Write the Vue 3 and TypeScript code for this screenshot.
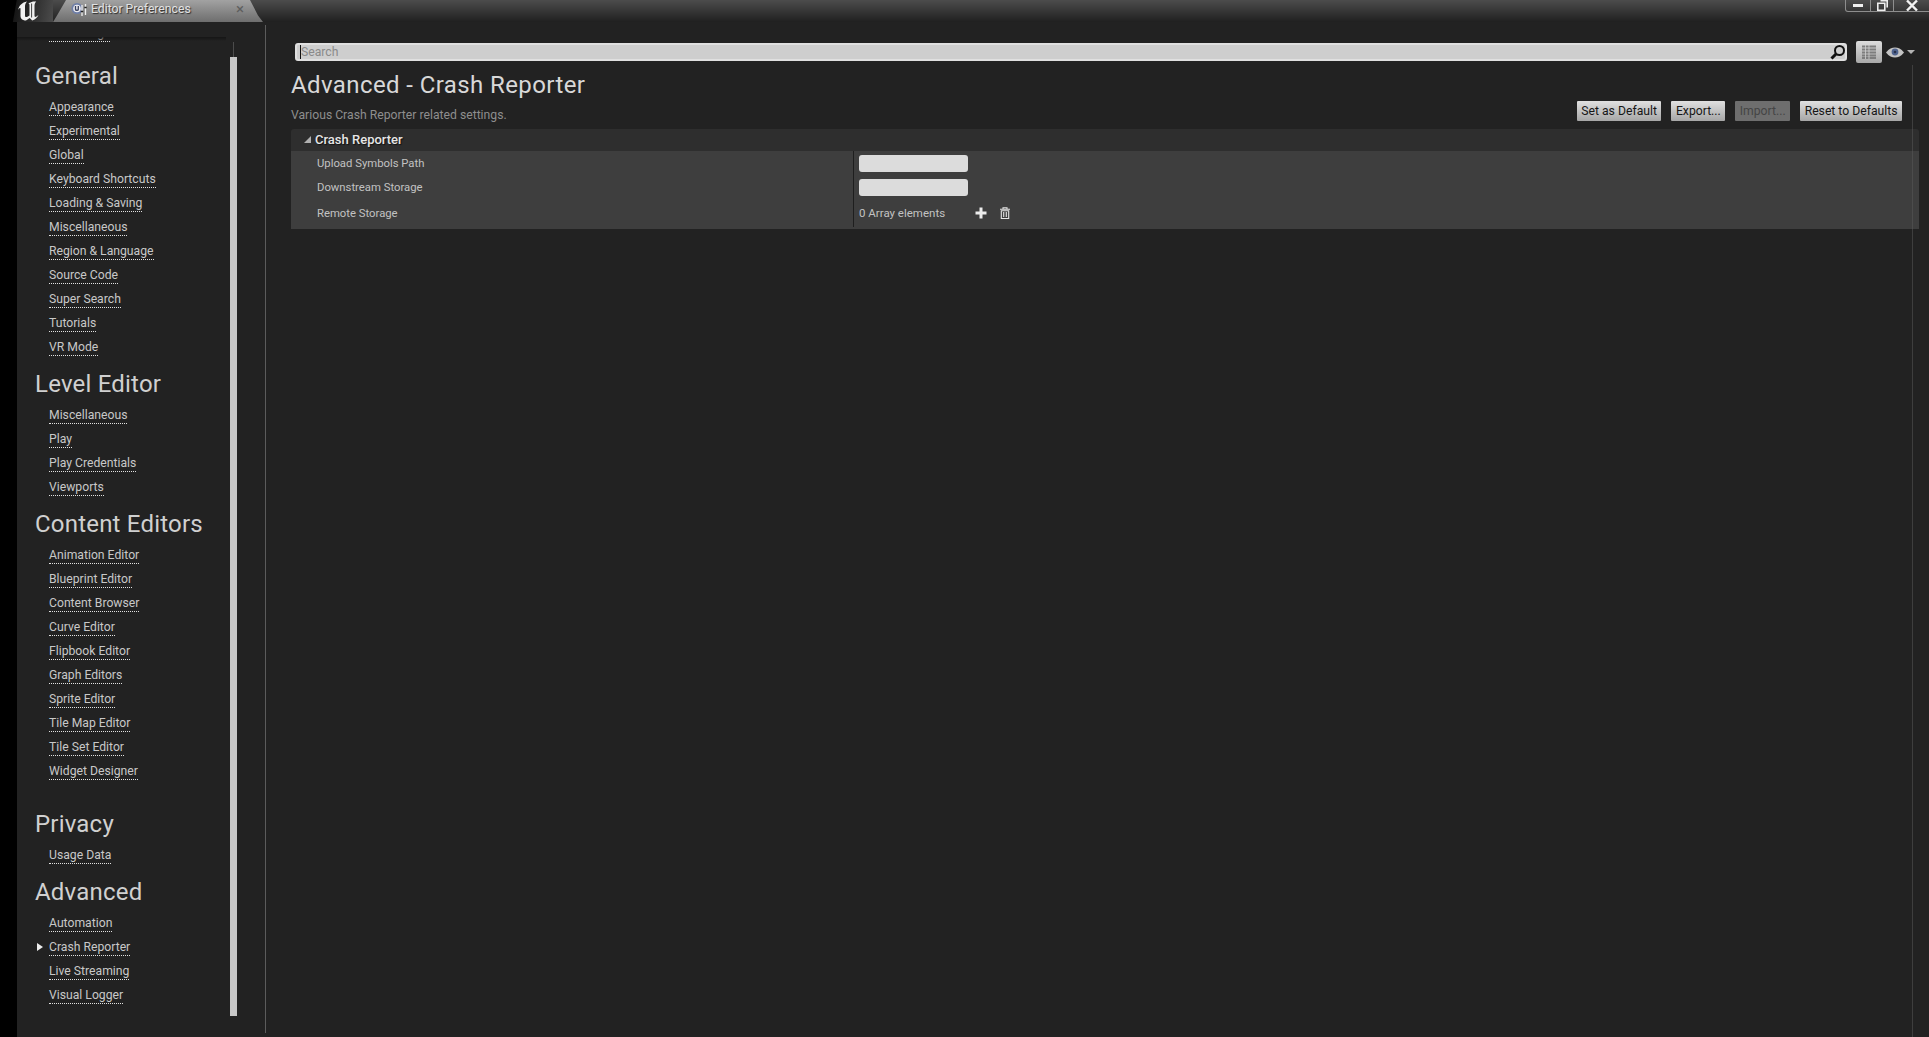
<script setup lang="ts">
interface Section { title: string; gap: string; items: string[] }
const sections: Section[] = [
  { title: 'General', gap: 'g16', items: ['Appearance', 'Experimental', 'Global', 'Keyboard Shortcuts', 'Loading & Saving', 'Miscellaneous', 'Region & Language', 'Source Code', 'Super Search', 'Tutorials', 'VR Mode'] },
  { title: 'Level Editor', gap: 'g10', items: ['Miscellaneous', 'Play', 'Play Credentials', 'Viewports'] },
  { title: 'Content Editors', gap: 'g10', items: ['Animation Editor', 'Blueprint Editor', 'Content Browser', 'Curve Editor', 'Flipbook Editor', 'Graph Editors', 'Sprite Editor', 'Tile Map Editor', 'Tile Set Editor', 'Widget Designer'] },
  { title: 'Privacy', gap: 'g26', items: ['Usage Data'] },
  { title: 'Advanced', gap: 'g10', items: ['Automation', 'Crash Reporter', 'Live Streaming', 'Visual Logger'] },
]
const buttons = [
  { label: 'Set as Default', off: false },
  { label: 'Export...', off: false },
  { label: 'Import...', off: true },
  { label: 'Reset to Defaults', off: false },
]
</script>

<template>
  <div class="app">
    <header class="titlebar">
      <div class="logo">
        <svg width="24" height="20" viewBox="0 0 24 20">
          <path fill="#f2f2f2" d="M1 9C2 4.500 5 1.500 10 .5 8.500 2 8 3.500 8 6v8.500c0 1.500 1 2 2.500 1.300L12.500 14.500V4.500C12.500 3.300 12.200 2.800 11.500 2.300L16 .5h3.200C18 2 17.500 3 17.500 5v9.500c0 1.600.8 1.800 2.300.8L21.500 14c-1.400 2.800-3.700 4.800-6.300 5.500l-2.500-2.600L9 19.500c-3 0-5.500-1.500-5.500-4.500V8.500C3.500 6.500 2.800 6.500 1 9z" />
          <path fill="none" stroke="#2a2a2a" stroke-width=".9" d="M14.600 2.500V16.500" />
        </svg>
      </div>
      <div class="tab">
        <svg class="tab-icon" width="16" height="15" viewBox="0 0 16 15">
          <circle cx="6" cy="6.500" r="5.500" fill="#6f7fa8" />
          <circle cx="6" cy="6.500" r="3.800" fill="#e8e8ee" />
          <path d="M4.500 4v3.500c0 1.200 2.800 1.200 2.800 0V4" stroke="#39415c" stroke-width="1.300" fill="none" />
          <path d="M11 3v11M14.500 2v11" stroke="#f0f0f0" stroke-width="1.300" />
          <path d="M9.800 9.500h2.400M13.300 5.500h2.400" stroke="#222" stroke-width="1.500" />
        </svg>
        <span class="tab-label">Editor Preferences</span>
        <span class="tab-close">×</span>
      </div>
      <div class="spacer"></div>
      <div class="winctl">
        <div class="wbtn w-min"><i></i></div>
        <div class="wbtn w-max">
          <svg width="11" height="11" viewBox="0 0 11 11"><path d="M3.500 .8h6.700v6.700M.8 3.200h7v7h-7z" fill="none" stroke="#eee" stroke-width="1.600" /></svg>
        </div>
        <div class="wbtn w-close">
          <svg width="12" height="11" viewBox="0 0 12 11"><path d="M1 .5l10 10M11 .5l-10 10" stroke="#f2f2f2" stroke-width="2.400" /></svg>
        </div>
      </div>
    </header>

    <div class="body">
      <div class="strip"></div>
      <aside class="sidebar">
        <nav class="nav">
          <div class="row first"><span class="link">All Settings</span></div>
          <section v-for="s in sections" :key="s.title" :class="s.gap">
            <h2 class="heading">{{ s.title }}</h2>
            <div v-for="it in s.items" :key="it" class="row">
              <i v-if="it === 'Crash Reporter'" class="marker"></i>
              <span class="link">{{ it }}</span>
            </div>
          </section>
          <div class="navshade"></div>
        </nav>
        <div class="scroll">
          <div class="scroll-line"></div>
          <div class="scroll-thumb"></div>
        </div>
      </aside>

      <main class="main">
        <div class="toolbar">
          <div class="search">
            <span class="caret"></span>
            <span class="search-text">Search</span>
            <svg class="glass" width="16" height="16" viewBox="0 0 16 16">
              <circle cx="9.500" cy="6.500" r="4.500" fill="none" stroke="#111" stroke-width="2" />
              <path d="M6 10l-4.500 4.500" stroke="#111" stroke-width="3" />
            </svg>
          </div>
          <div class="listbtn">
            <svg width="14" height="14" viewBox="0 0 14 14">
              <path d="M0 1.500h14M0 4.500h14M0 7.500h14M0 10.500h14M0 13h14" stroke="#7d7d7d" stroke-width="2" />
              <path d="M3.500 0v14M7 0v14" stroke="#d0d0d0" stroke-width=".8" />
            </svg>
          </div>
          <svg class="eye" width="18" height="11" viewBox="0 0 18 11">
            <path d="M0 5.500C3 1.500 6 .5 9 .5s6 1 9 5c-3 4-6 5-9 5s-6-1-9-5z" fill="#c4c4c4" />
            <circle cx="9" cy="5" r="3.400" fill="#50648f" />
            <circle cx="9" cy="5" r="1.300" fill="#28324c" />
          </svg>
          <i class="eye-arrow"></i>
        </div>

        <div class="pagehead">
          <div class="heads">
            <h1 class="title">Advanced - Crash Reporter</h1>
            <p class="desc">Various Crash Reporter related settings.</p>
          </div>
          <div class="actions">
            <button v-for="b in buttons" :key="b.label" class="btn" :class="{ off: b.off }">{{ b.label }}</button>
          </div>
        </div>

        <div class="panel">
          <div class="panel-head"><i class="tri"></i><span>Crash Reporter</span></div>
          <div class="panel-body">
            <div class="labels">
              <div class="lab l1">Upload Symbols Path</div>
              <div class="lab l2">Downstream Storage</div>
              <div class="lab l3">Remote Storage</div>
            </div>
            <div class="values">
              <div class="val l1"><div class="input"></div></div>
              <div class="val l2"><div class="input"></div></div>
              <div class="val l3">
                <span class="count">0 Array elements</span>
                <svg class="plus" width="12" height="12" viewBox="0 0 12 12"><path d="M6 .5v11M.5 6h11" stroke="#ededed" stroke-width="3" /></svg>
                <svg class="trash" width="10" height="12" viewBox="0 0 10 12">
                  <path d="M0 2.300h10M3 2V.7h4V2" stroke="#e4e4e4" stroke-width="1.100" fill="none" />
                  <path d="M1.300 3.800h7.400v7.700H1.300z" fill="none" stroke="#e4e4e4" stroke-width="1.100" />
                  <path d="M3.700 5v5M6.300 5v5" stroke="#e4e4e4" stroke-width="1.100" />
                </svg>
              </div>
            </div>
          </div>
        </div>
        <div class="rightline"></div>
      </main>
    </div>
  </div>
</template>

<style>
html, body { margin: 0; background: #222; }
</style>

<style scoped>
.app {
  width: 1929px;
  height: 1037px;
  display: flex;
  flex-direction: column;
  overflow: hidden;
  background: #222;
  font-family: Roboto, "Liberation Sans", sans-serif;
  color: #cfcfcf;
}
.titlebar {
  height: 22px;
  display: flex;
  flex: none;
  background: linear-gradient(#4c4c4c, #202020);
}
.logo {
  width: 53px;
  padding: 1px 0 0 17px;
  box-sizing: border-box;
  background: linear-gradient(100deg, #000 0 16px, #161616 17px, #2a2a2a 32px, #4c4c4c);
}
.tab {
  width: 210px;
  display: flex;
  align-items: center;
  padding: 0 21px 4px 18px;
  box-sizing: border-box;
  clip-path: polygon(0 100%, 4px 70%, 13px 0, 197px 0, 205px 70%, 100% 100%);
  background: linear-gradient(#a2a2a2, #6e6e6e);
}
.tab-icon { margin-right: 4px; }
.tab-label {
  font-size: 12.200px;
  color: #e2e2e2;
  text-shadow: 1px 1px 1px #2c2c2c;
  flex: 1;
  white-space: nowrap;
}
.tab-close { font-size: 15px; color: #5e5e5e; margin-right: -2px; }
.spacer { flex: 1; }
.winctl { display: flex; height: 12px; align-items: stretch; }
.wbtn {
  border: 1px solid #8e8e8e;
  border-top: none;
  box-sizing: border-box;
  display: flex;
  align-items: center;
  justify-content: center;
}
.w-min { width: 26px; border-radius: 0 0 0 3px; }
.w-min i { width: 10px; height: 3px; background: #efefef; }
.w-max { width: 23px; border-left: none; }
.w-close { width: 35px; border-left: none; border-right: none; }

.body { flex: 1; display: flex; min-height: 0; }
.strip { width: 17px; background: #000; flex: none; }
.sidebar {
  width: 248px;
  flex: none;
  display: flex;
  box-sizing: border-box;
  padding-top: 15px;
  border-right: 1px solid transparent;
}
.nav {
  width: 213px;
  flex: none;
  position: relative;
  overflow: hidden;
}
.navshade {
  position: absolute;
  left: 0;
  right: 4px;
  top: 0;
  height: 4px;
  background: linear-gradient(rgba(18, 18, 18, .8), rgba(18, 18, 18, 0));
}
.row {
  height: 24px;
  box-sizing: border-box;
  padding: 2px 0 0 32px;
  display: flex;
  align-items: center;
  position: relative;
}
.row.first { margin-top: -16px; }
.link {
  font-size: 12.200px;
  line-height: 15px;
  color: #c8c8c8;
  border-bottom: 1px dotted #e2e2e2;
  white-space: nowrap;
}
.marker {
  position: absolute;
  left: 20px;
  top: 8px;
  width: 0;
  height: 0;
  border-left: 6px solid #ededed;
  border-top: 4px solid transparent;
  border-bottom: 4px solid transparent;
}
.g16 { margin-top: 16px; }
.g10 { margin-top: 10px; }
.g26 { margin-top: 26px; }
.heading {
  margin: 0 0 4px;
  padding-left: 18px;
  font-size: 24px;
  line-height: 30px;
  height: 30px;
  font-weight: 400;
  letter-spacing: .2px;
  color: #d0d0d0;
}
.scroll {
  width: 7px;
  flex: none;
  display: flex;
  flex-direction: column;
  align-items: center;
  padding-top: 5px;
}
.scroll-line { width: 1px; height: 15px; background: #4c4c4c; }
.scroll-thumb { width: 7px; height: 959px; background: #c8c8c8; }

.main {
  flex: 1;
  min-width: 0;
  position: relative;
  box-sizing: border-box;
  margin-top: 3px;
  margin-bottom: 4px;
  border-left: 1px solid #5c5c5c;
  padding: 16px 10px 0 25px;
}
.toolbar {
  height: 22px;
  display: flex;
  align-items: center;
  padding-left: 4px;
}
.search {
  flex: 1;
  height: 18px;
  box-sizing: border-box;
  background: #cecece;
  border: 2px solid #e0e0e0;
  border-radius: 3px;
  display: flex;
  align-items: center;
  padding-left: 3px;
}
.caret { width: 1px; height: 14px; background: #111; }
.search-text { font-size: 12.200px; line-height: 14px; color: #8a8a8a; flex: 1; }
.glass { margin-right: -1px; }
.listbtn {
  width: 26px;
  height: 22px;
  margin-left: 9px;
  background: linear-gradient(#dcdcdc, #a9a9a9);
  border-radius: 2px;
  display: flex;
  align-items: center;
  justify-content: center;
}
.eye { margin-left: 4px; }
.eye-arrow {
  margin-left: 3px;
  margin-right: 4px;
  width: 0;
  height: 0;
  border-top: 4px solid #b4b4b4;
  border-left: 4px solid transparent;
  border-right: 4px solid transparent;
}
.pagehead {
  display: flex;
  justify-content: space-between;
  align-items: flex-start;
  height: 58px;
}
.heads { padding-top: 7px; }
.title {
  margin: 0;
  font-size: 24px;
  line-height: 30px;
  font-weight: 400;
  letter-spacing: .4px;
  color: #d8d8d8;
}
.desc {
  margin: 7px 0 0;
  font-size: 12.200px;
  line-height: 16px;
  color: #8e8e8e;
}
.actions { align-self: flex-end; display: flex; gap: 10px; padding-right: 17px; }
.btn {
  height: 20px;
  padding: 0 4.500px;
  border: none;
  border-radius: 1px;
  font-family: inherit;
  font-size: 12.200px;
  color: #161616;
  background: linear-gradient(#e0e0e0, #a6a6a6);
  white-space: nowrap;
}
.btn.off { background: #6e6e6e; color: #454545; }
.panel {
  margin-top: 8px;
  border-radius: 3px 3px 0 0;
  overflow: hidden;
}
.panel-head {
  height: 22px;
  box-sizing: border-box;
  padding: 0 0 2px 13px;
  background: #2e2e2e;
  display: flex;
  align-items: center;
  font-size: 13px;
  font-weight: 500;
  color: #e6e6e6;
  text-shadow: 1px 1px 1px #111;
}
.tri {
  width: 0;
  height: 0;
  border-bottom: 7px solid #b0b0b0;
  border-left: 7px solid transparent;
  margin-right: 4px;
}
.panel-body {
  height: 78px;
  background: #3e3e3e;
  display: flex;
}
.labels { width: 562px; flex: none; padding-left: 26px; box-sizing: border-box; }
.values {
  flex: 1;
  height: 76px;
  border-left: 1px solid #1e1e1e;
  padding-left: 5px;
}
.lab, .val { display: flex; align-items: center; font-size: 11.300px; color: #c2c2c2; }
.val { font-size: 11.500px; }
.l1 { height: 24px; }
.l2 { height: 24px; }
.l3 { height: 28px; }
.input { width: 109px; height: 17px; border-radius: 3px; background: #dcdcdc; }
.count { width: 116px; }
.plus { margin-right: 13px; }
.rightline {
  position: absolute;
  right: 16px;
  top: 40px;
  bottom: -4px;
  width: 1px;
  background: rgba(90, 90, 90, .5);
}
</style>
